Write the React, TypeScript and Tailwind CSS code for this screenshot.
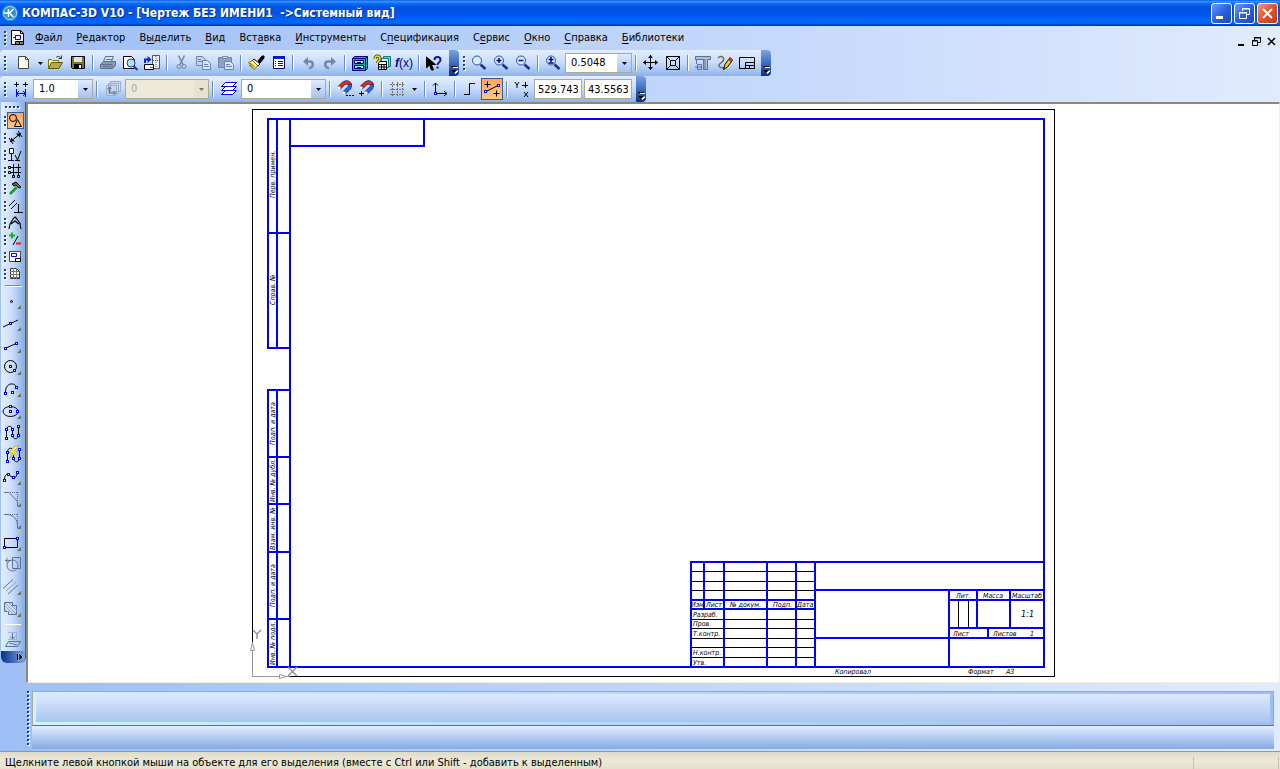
import React from 'react';

type IconProps = { children: React.ReactNode; size?: number };

const Icon: React.FC<IconProps> = ({ children, size = 22 }) => (
  <svg width={size} height={size} viewBox={`0 0 ${size} ${size}`} fill="none" stroke="#000" aria-hidden="true" className="shrink-0">
    {children}
  </svg>
);

const Tool: React.FC<{ label: string; active?: boolean; disabled?: boolean; children: React.ReactNode }> = ({ label, active, disabled, children }) => (
  <button
    type="button"
    aria-label={label}
    title={label}
    disabled={disabled}
    className={active ? 'shrink-0 bg-linear-to-b from-[#fda45c] to-[#ffc981] outline-1 -outline-offset-1 outline-[#3d5a94]' : 'shrink-0 hover:bg-[#ffe7b8]'}
  >
    {children}
  </button>
);

const Sep = () => (
  <div className="flex w-2 shrink-0 justify-center">
    <div className="h-4 w-px bg-[#6a8ccb]" />
    <div className="h-4 w-px bg-white" />
  </div>
);

const Grip: React.FC<{ count?: number; vertical?: boolean }> = ({ count = 4, vertical = true }) => (
  <div className={vertical ? 'flex shrink-0 flex-col gap-0.5' : 'flex shrink-0 gap-0.5'}>
    {Array.from({ length: count }, (_, i) => (
      <span key={i} className="size-0.5 bg-[#27406f] shadow-[1px_1px_0_#fff]" />
    ))}
  </div>
);

const Arrow = () => (
  <svg width="5" height="3" viewBox="0 0 5 3" aria-hidden="true">
    <path d="M0 0h5L2.500 3z" fill="#000" />
  </svg>
);

const Cap = () => (
  <button type="button" aria-label="Параметры панели" className="flex w-[10px] shrink-0 items-end justify-center self-stretch rounded-r-sm bg-linear-to-b from-[#7ba3e2] via-[#3f6dbd] to-[#04328a] pb-0.5">
    <svg width="7" height="8" viewBox="0 0 7 8" aria-hidden="true">
      <path d="M2 1.500h5M2 5h5L4.500 7.500z" stroke="#fff" fill="#fff" />
      <path d="M0 0h6v1H0zM0 4h6L3 7z" fill="#000" />
    </svg>
  </button>
);

const Combo: React.FC<{ label: string; value: string; width: string; disabled?: boolean }> = ({ label, value, width, disabled }) => (
  <div className={`flex h-5 shrink-0 border border-[#aca899] ${width} ${disabled ? 'bg-[#ece9d8]' : 'bg-white'}`}>
    <select aria-label={label} disabled={disabled} className="min-w-0 flex-1 appearance-none bg-transparent pl-[5px] text-[11px] leading-4 outline-none disabled:text-[#aca899]">
      <option>{value}</option>
    </select>
    <div className={`flex w-[14px] items-center justify-center ${disabled ? 'bg-[#e0ddca] opacity-50' : 'bg-linear-to-b from-[#dfebff] to-[#a5c3f2]'}`}>
      <Arrow />
    </div>
  </div>
);

const Node: React.FC<{ x: number; y: number }> = ({ x, y }) => (
  <rect x={x - 1} y={y - 1} width="2" height="2" fill="#fff" stroke="#00f" />
);

const Corner = () => <path d="M19 15v4h-4z" fill="#716f64" stroke="none" />;

const Lens: React.FC<{ sign?: string }> = ({ sign }) => (
  <Icon>
    <path d="M12.500 12.500l5 4.500" stroke="#1a2f8c" strokeWidth="2.500" />
    <circle cx="9" cy="8.500" r="4.500" fill="#d3edff" stroke="#33508f" />
    {sign && <path d={sign} stroke="#00008b" strokeWidth="1.500" />}
  </Icon>
);

const Magnet: React.FC<{ extra: React.ReactNode }> = ({ extra }) => (
  <Icon>
    <path d="M5 10l4-4c5-4 10 1 5 5l-4 4" stroke="#14286e" strokeWidth="4" />
    <path d="M6 9l3-3c3-2 6-2 7 0" stroke="#e22a10" strokeWidth="3" />
    <path d="M16 7c0 2-1 3-2 4l-3 3" stroke="#2a62e8" strokeWidth="3" />
    <path d="M4.500 10.500l1.500-1.500M9.500 15.500l1.500-1.500" stroke="#fff" strokeWidth="3" />
    {extra}
  </Icon>
);

const menu = [
  ['', 'Ф', 'айл'],
  ['', 'Р', 'едактор'],
  ['В', 'ы', 'делить'],
  ['', 'В', 'ид'],
  ['Вст', 'а', 'вка'],
  ['', 'И', 'нструменты'],
  ['С', 'п', 'ецификация'],
  ['С', 'е', 'рвис'],
  ['', 'О', 'кно'],
  ['', 'С', 'правка'],
  ['', 'Б', 'иблиотеки'],
];

const TitleBar = () => (
  <header className="flex h-[26px] items-center bg-[linear-gradient(#0a5be8_0%,#3593ff_6%,#0a6cf5_14%,#0054e3_26%,#0055e8_55%,#0066ff_78%,#0062f5_90%,#0040b0_97%,#003399_100%)] pr-0.5">
    <svg width="16" height="16" viewBox="0 0 16 16" className="ml-0.5 shrink-0" aria-hidden="true">
      <circle cx="8" cy="8" r="8" fill="#2f8fc8" />
      <circle cx="8" cy="8" r="6.500" fill="none" stroke="#a9def5" />
      <path d="M6.500 4v8M11.500 4L7.500 8l4 4M2 8h5" stroke="#fff" strokeWidth="1.500" fill="none" />
    </svg>
    <h1 className="ml-1 flex-1 whitespace-pre font-['DejaVu_Sans_Condensed','DejaVu_Sans',sans-serif] text-xs font-bold text-white [text-shadow:1px_1px_#0a2f88]">
      КОМПАС-3D V10 - [Чертеж БЕЗ ИМЕНИ1  -&gt;Системный вид]
    </h1>
    <div className="flex gap-0.5">
      <button type="button" aria-label="Свернуть" className="size-[21px] rounded-[3px] border border-white bg-linear-to-br from-[#6b9bf8] via-[#2b62e0] to-[#1c47c0]">
        <svg width="19" height="19" viewBox="0 0 19 19"><path d="M4 13.500h7" stroke="#fff" strokeWidth="3" /></svg>
      </button>
      <button type="button" aria-label="Восстановить" className="size-[21px] rounded-[3px] border border-white bg-linear-to-br from-[#6b9bf8] via-[#2b62e0] to-[#1c47c0]">
        <svg width="19" height="19" viewBox="0 0 19 19" fill="none" stroke="#fff"><path d="M7.500 7V4.500h7v6H12M7 5h8M4.500 8.500h7v6h-7zM4 9h8" /></svg>
      </button>
      <button type="button" aria-label="Закрыть" className="size-[21px] rounded-[3px] border border-white bg-linear-to-br from-[#f0957c] via-[#e0512c] to-[#c23a12]">
        <svg width="19" height="19" viewBox="0 0 19 19"><path d="M5 5l9 9M14 5l-9 9" stroke="#fff" strokeWidth="2" /></svg>
      </button>
    </div>
  </header>
);

const MenuBar = () => (
  <nav aria-label="Главное меню" className="flex h-6 items-center pl-1 pr-1">
    <Grip />
    <svg width="14" height="16" viewBox="0 0 14 16" className="ml-[5px] mr-1 shrink-0" fill="none" stroke="#000" aria-hidden="true">
      <path d="M.5.500h9l3 3v11H.5z" fill="#fff" />
      <path d="M9.500.500v3h3" />
      <path d="M2 7.500h2M4.500 5v5M4.500 5.500h5v4h-5" stroke="#00f" />
      <path d="M4.500 11.500h8v3h-8zM8.500 12v3M5 13h7" />
    </svg>
    <div className="flex flex-1 gap-0.5">
      {menu.map(([before, key, after]) => (
        <button key={key + after} type="button" className="shrink-0 px-1.5 hover:bg-[#ffe7b8]">
          {before}
          <u className="underline-offset-2">{key}</u>
          {after}
        </button>
      ))}
    </div>
    <div className="mt-1.5 flex gap-1.5">
      <button type="button" aria-label="Свернуть документ">
        <svg width="8" height="9" viewBox="0 0 8 9"><path d="M0 8h6" stroke="#000" strokeWidth="2" /></svg>
      </button>
      <button type="button" aria-label="Восстановить документ">
        <svg width="9" height="9" viewBox="0 0 9 9" fill="none" stroke="#000"><path d="M2.500 3V.500h6v5H6M2 1h7M.5 3.500h5v5h-5zM0 4h6" /></svg>
      </button>
      <button type="button" aria-label="Закрыть документ">
        <svg width="9" height="9" viewBox="0 0 9 9"><path d="M1 1l7 7M8 1L1 8" stroke="#000" strokeWidth="1.500" /></svg>
      </button>
    </div>
  </nav>
);

const StandardBar = () => (
  <div className="flex h-[26px] items-center rounded-sm bg-linear-to-b from-[#e3eeff] via-[#c6dbfb] to-[#8db3ec] pl-1" role="toolbar" aria-label="Стандартная">
    <Grip />
    <div className="ml-[7px] flex items-center">
      <Tool label="Создать">
        <Icon>
          <path d="M5.500 4.500h7l3 3v9h-10z" fill="#fffdf0" stroke="#444" />
          <path d="M12.500 4.500v3h3" stroke="#444" />
        </Icon>
      </Tool>
      <button type="button" aria-label="Виды документов" className="flex w-[10px] justify-center"><Arrow /></button>
      <Tool label="Открыть">
        <Icon>
          <path d="M3.500 16.500v-9h3l1 1h6v2" fill="#fff3a0" stroke="#7a7a00" />
          <path d="M3.500 16.500l3-6h11l-3.500 6z" fill="#b5a94a" stroke="#5d5a00" />
          <path d="M11 5.500c2-2 4-1 5 1M16.500 3.500v3h-3" stroke="#333" />
        </Icon>
      </Tool>
      <Tool label="Сохранить">
        <Icon>
          <path d="M4.500 4.500h13v12h-12l-1-1z" fill="#7d7a10" />
          <path d="M7 5h8v5H7z" fill="#d9e2ee" stroke="none" />
          <path d="M7 12h8v5H7z" fill="#000" stroke="none" />
          <path d="M12 13h2v3h-2z" fill="#fff" stroke="none" />
        </Icon>
      </Tool>
      <Sep />
      <Tool label="Печать">
        <Icon>
          <path d="M6.500 9.500l2-5h8l-2 5z" fill="#dce6f6" stroke="#5d6f8d" />
          <path d="M3.500 12.500l3-3h12v4l-3 3h-12z" fill="#8a9ab5" stroke="#5d6f8d" />
          <path d="M4 12.500h11v4M6 14.500h7M9 7.500h6" stroke="#5d6f8d" />
        </Icon>
      </Tool>
      <Tool label="Предварительный просмотр">
        <Icon>
          <path d="M4.500 4.500h8l3 3v9h-11z" fill="#fff" />
          <circle cx="12" cy="11" r="4" fill="#b5e2f5" stroke="#1b3f90" />
          <path d="M14.500 14l4 4" stroke="#1b3f90" strokeWidth="2" />
        </Icon>
      </Tool>
      <Tool label="Менеджер документа">
        <Icon>
          <path d="M11.500 3.500h7v13h-7z" fill="#eef2fa" stroke="#555" />
          <path d="M15 4v12M12 8.500h6" stroke="#555" strokeDasharray="1 1" />
          <path d="M4 11V7.500h4" stroke="#0028e0" strokeWidth="2" />
          <path d="M6.500 4l4 3.500-4 3.500z" fill="#0028e0" stroke="none" />
          <path d="M3.500 12.500h9v5h-9z" fill="#fff" />
          <path d="M9 15.500h3" stroke="#e02020" />
        </Icon>
      </Tool>
      <Sep />
      <Tool label="Вырезать" disabled>
        <Icon>
          <path d="M7.500 3.500l4.500 9M13.500 3.500l-4.500 9" stroke="#6c84ac" strokeWidth="1.500" />
          <circle cx="8" cy="14.500" r="2" stroke="#6c84ac" />
          <circle cx="13" cy="14.500" r="2" stroke="#6c84ac" />
        </Icon>
      </Tool>
      <Tool label="Копировать" disabled>
        <Icon>
          <path d="M3.500 4.500h6l3 3v6h-9z" fill="#c3d3ee" stroke="#6c84ac" />
          <path d="M9.500 8.500h5l3 3v6h-8z" fill="#d9e4f6" stroke="#6c84ac" />
          <path d="M5 7.500h3M5 9.500h4M11 12.500h4M11 14.500h5" stroke="#6c84ac" />
        </Icon>
      </Tool>
      <Tool label="Вставить" disabled>
        <Icon>
          <path d="M3.500 5.500h13v10h-13z" fill="#8ea2c4" stroke="#6c84ac" />
          <path d="M7.500 4.500h5v2h-5z" fill="#d9e4f6" stroke="#6c84ac" />
          <path d="M9.500 9.500h6l3 3v5h-9z" fill="#d9e4f6" stroke="#6c84ac" />
          <path d="M11 12.500h4M11 14.500h6" stroke="#6c84ac" />
        </Icon>
      </Tool>
      <Sep />
      <Tool label="Копировать свойства">
        <Icon>
          <path d="M13 9l4-5h2v2l-4 5z" fill="#000" />
          <path d="M9 7l6 5-2 2-6-5z" fill="#fff" />
          <path d="M3.500 10.500l4-2 5 5-3 4z" fill="#fff08a" stroke="#7a7a00" />
          <path d="M5 11l5 4M4 13l5 4" stroke="#7a7a00" />
        </Icon>
      </Tool>
      <Tool label="Свойства">
        <Icon>
          <path d="M6.500 4.500h11v12h-11z" fill="#fff" stroke="#000080" />
          <path d="M6 5.500h12" stroke="#0018c8" strokeWidth="3" />
          <path d="M8 9.500h1M8 11.500h1M8 13.500h1M11 9.500h5M11 11.500h5M11 13.500h5" stroke="#0018c8" />
        </Icon>
      </Tool>
      <Sep />
      <Tool label="Отменить" disabled>
        <Icon>
          <path d="M9 9.500h4c3 0 4 4 1 6l-2 1" stroke="#7488ae" strokeWidth="2.500" />
          <path d="M11 5v9L6 9.500z" fill="#7488ae" stroke="none" />
        </Icon>
      </Tool>
      <Tool label="Повторить" disabled>
        <Icon>
          <path d="M13 9.500H9c-3 0-4 4-1 6l2 1" stroke="#7488ae" strokeWidth="2.500" />
          <path d="M12 5v9l5-4.500z" fill="#7488ae" stroke="none" />
        </Icon>
      </Tool>
      <Sep />
      <Tool label="Менеджер библиотек">
        <Icon>
          <path d="M3.500 6.500l2-2h13v12l-2 2h-13z" fill="#21a5b5" stroke="#000080" />
          <path d="M3.500 6.500h13v12M16.500 6.500l2-2" stroke="#000080" />
          <path d="M5.500 8.500h9v3h-9zM5.500 13.500h9v3h-9z" fill="#a0f0f5" stroke="#000080" />
          <path d="M8 10.500h4M8 15.500h4" stroke="#000080" />
        </Icon>
      </Tool>
      <Tool label="Справочник">
        <Icon>
          <path d="M12.500 4.500h7v10h-7z" fill="#5fd8e0" stroke="#127880" />
          <path d="M10.500 6.500h7v9h-7z" fill="#d8f7fa" stroke="#127880" />
          <path d="M7.500 9.500h8v8h-8z" fill="#fff" />
          <path d="M8 12.500h7M8 15h7M10.500 12v6M13 12v6" />
          <path d="M4 7c0-4 5-4 5 0 0 2-2 1.500-2.500 4" stroke="#333" strokeWidth="3" />
          <path d="M4 7c0-4 5-4 5 0 0 2-2 1.500-2.500 4" stroke="#f5e900" strokeWidth="1.500" />
        </Icon>
      </Tool>
      <button type="button" aria-label="Переменные" className="w-[22px] shrink-0 text-center font-['Liberation_Sans',sans-serif] text-xs font-bold text-[#000080]">
        <i>f</i><span className="font-normal">(x)</span>
      </button>
      <Sep />
      <Tool label="Что это такое?">
        <Icon>
          <path d="M3.500 5v11l3-3 2 5h2l-2-5.500h4z" fill="#000" />
          <path d="M11.500 8c0-4 6-4 6 0 0 2.500-3 2-3 5M14.500 14.500v2" stroke="#0a1e8c" strokeWidth="2" />
        </Icon>
      </Tool>
    </div>
    <div className="ml-1 flex self-stretch"><Cap /></div>
    <div className="ml-1 flex items-center">
      <Grip />
      <div className="ml-[3px] mr-px flex items-center">
        <Tool label="Увеличить масштаб рамкой"><Lens /></Tool>
        <Tool label="Увеличить масштаб"><Lens sign="M6.500 8.500h5M9 6v5" /></Tool>
        <Tool label="Уменьшить масштаб"><Lens sign="M6.500 8.500h5" /></Tool>
        <Sep />
        <Tool label="Масштаб"><Lens sign="M6.500 7.500h5M9 5v5M6.500 11h5" /></Tool>
      </div>
      <Combo label="Текущий масштаб" value="0.5048" width="w-[67px]" />
      <Sep />
      <Tool label="Сдвинуть">
        <Icon>
          <path d="M3 10.500h15M10.500 3v15" />
          <path d="M3 10.500l3-2.500v5zM18 10.500l-3-2.500v5zM10.500 3L8 6h5zM10.500 18L8 15h5z" fill="#000" stroke="none" />
        </Icon>
      </Tool>
      <Tool label="Показать все">
        <Icon>
          <path d="M4.500 4.500h13v13h-13zM8.500 8.500h5v5h-5zM4.500 4.500l4 4M17.500 4.500l-4 4M4.500 17.500l4-4M17.500 17.500l-4-4" />
        </Icon>
      </Tool>
      <Sep />
      <Tool label="Библиотеки стандартных элементов">
        <Icon>
          <path d="M3.500 8V4.500h15v3h-3v10h-4v-10h-8" fill="#aebfd9" stroke="#5f7190" />
          <path d="M13 7v10M4.500 8v4M5.500 12.500h4v5h-4zM3 15h6" stroke="#5f7190" />
        </Icon>
      </Tool>
      <Tool label="Редактировать">
        <Icon>
          <path d="M4 6c4-4 8 1 4 4s-5 5 2 6" stroke="#6b6b50" strokeWidth="1.500" />
          <path d="M9.500 17.500l1.500-5 5-7 2.500 2.500-5 7z" fill="#ffd400" />
          <path d="M14 7.500l2.500 2.500 2-2-2-3z" fill="#d03020" stroke="none" />
        </Icon>
      </Tool>
      <Tool label="Основная надпись">
        <Icon>
          <path d="M3.500 5.500h15v11h-15zM9.500 10.500h9v6h-9zM10 13.500h8M13.500 13v3" />
        </Icon>
      </Tool>
    </div>
    <div className="ml-[3px] flex self-stretch"><Cap /></div>
  </div>
);

const coord = 'h-5 w-12 shrink-0 border border-[#aca899] bg-white px-[3px] text-[11px] leading-4 outline-none';

const StateBar = () => (
  <div className="flex h-[26px] items-center rounded-sm bg-linear-to-b from-[#e3eeff] via-[#c6dbfb] to-[#8db3ec] pl-1" role="toolbar" aria-label="Текущее состояние">
    <Grip />
    <div className="ml-1 flex items-center">
      <div className="mr-px flex">
        <Tool label="Текущий шаг курсора">
          <Icon>
            <path d="M4 6.500h5M6.500 4v5M13 6.500h5M15.500 4v5" />
            <path d="M6.500 11v8M15.500 11v8M6 15.500h10M9 13l-2.500 2.500L9 18M13 13l2.500 2.500L13 18" stroke="#00f" />
          </Icon>
        </Tool>
      </div>
      <Combo label="Шаг курсора" value="1.0" width="w-[60px]" />
      <Sep />
      <div className="mx-px flex">
        <Tool label="Состояние видов" disabled>
          <Icon>
            <path d="M8.500 3.500h10v10h-10zM6.500 5.500h10v10h-10zM4.500 7.500h10v10h-10z" fill="#c9d7ef" stroke="#9badcb" />
            <path d="M7.500 9v6h6M5.500 11l2-2 2 2M11.500 13l2 2-2 2" stroke="#5e7194" />
          </Icon>
        </Tool>
      </div>
      <Combo label="Номер вида" value="0" width="w-[84px]" disabled />
      <Sep />
      <div className="mx-px flex">
        <Tool label="Состояние слоев">
          <Icon>
            <path d="M3.500 16.500l4-4h11l-4 4zM3.500 12.500l4-4h11l-4 4zM3.500 8.500l4-4h11l-4 4z" fill="#fff" stroke="#0000e6" />
          </Icon>
        </Tool>
      </div>
      <Combo label="Текущий слой" value="0" width="w-[85px]" />
      <Sep />
      <Tool label="Настройка привязок"><Magnet extra={<path d="M12 17.500h2M15 17.500h2M18 17.500h2" stroke="#000" />} /></Tool>
      <Tool label="Запретить привязки"><Magnet extra={<path d="M3 15.500h5M5.500 13v5" />} /></Tool>
      <Sep />
      <Tool label="Сетка">
        <Icon>
          <path d="M4 6.500h15M4 11.500h15M4 16.500h15M6.500 4v14M11.500 4v14M16.500 4v14" stroke="#716f64" strokeDasharray="2 1" />
        </Icon>
      </Tool>
      <button type="button" aria-label="Параметры сетки" className="flex w-[13px] justify-center"><Arrow /></button>
      <Sep />
      <Tool label="Локальная система координат">
        <Icon>
          <path d="M6.500 15V5M4 7.500L6.500 5 9 7.500M8 15.500h10M15 13l3 2.500-3 2.500" />
          <Node x={6.5} y={15.5} />
        </Icon>
      </Tool>
      <Sep />
      <Tool label="Ортогональное черчение">
        <Icon><path d="M5 16.500h5.500v-11H16" /></Icon>
      </Tool>
      <Tool label="Округление" active>
        <Icon>
          <path d="M5 13.500l12-6M3.500 6.500h6M6.500 3.500v6M12.500 15.500h6M15.500 12.500v6" />
          <Node x={4.5} y={13.5} />
          <Node x={17.5} y={7.5} />
        </Icon>
      </Tool>
      <Sep />
      <div className="mr-px">
        <Icon>
          <path d="M4 4l2 3 2-3M6 7v3M13 14l4 5M17 14l-4 5" />
          <path d="M11 7.500h6M14.500 4v6" />
        </Icon>
      </div>
      <div className="flex gap-0.5">
        <input aria-label="Координата X" defaultValue="529.7438" className={coord} />
        <input aria-label="Координата Y" defaultValue="43.5563" className={coord} />
      </div>
    </div>
    <div className="ml-1 flex self-stretch"><Cap /></div>
  </div>
);

const panels: [string, React.ReactNode][] = [
  ['Геометрия', <><circle cx="6" cy="6" r="3.500" /><path d="M10.500 7.500l4 7h-7z" /></>],
  ['Размеры', <><path d="M3 13L14 4M2 9l4 6M11 2l4 6" /><path d="M4 12.500v-4l4 4zM13 4.500v4l-4-4z" fill="#000" stroke="none" /></>],
  ['Обозначения', <><path d="M2.500 2.500h4v5h-4z" fill="#fff" stroke="#000080" /><path d="M4.500 8v6M1 14.500h6" stroke="#000080" /><path d="M8 9l2.500 5L14 5M8 14.500h5" /></>],
  ['Обозначения для строительства', <path d="M4 4.500h10M4 9.500h10M6.500 1v11M11.500 1v11M1.500 3.500h2v2h-2zM1.500 8.500h2v2h-2zM5.500 12.500h2v2h-2zM10.500 12.500h2v2h-2z" />],
  ['Редактирование', <><path d="M3 14l7-7" stroke="#179a20" strokeWidth="2.500" /><path d="M5 4l4-2 5 5-2 1-3-3-2 1z" fill="#666" /></>],
  ['Параметризация', <path d="M2 9l6-6M4 12l6-6M11.500 7v8M7 15.500h9" />],
  ['Измерения', <path d="M7.500 3L3 10M8.500 3l5 7M6 5l2-2 2 2M3 10l-1 5M13 10l1 5M4 10l4-3 4 3" strokeWidth="1.200" />],
  ['Выделение', <><path d="M2 4.500h6M5 1.500v6" stroke="#0cb51a" strokeWidth="2" /><path d="M6 14l5-9" /><path d="M9 12.500h5" stroke="#f01818" strokeWidth="2" /></>],
  ['Ассоциативные виды', <><path d="M2.500 3.500h11v10h-11z" fill="#fff" stroke="#444" /><path d="M4.500 5.500h5v3h-5z" fill="#fff" stroke="#00f" /><path d="M8.500 10.500h5v3h-5z" /></>],
  ['Спецификация', <><path d="M3.500 3.500h6l3 3v7h-9z" fill="#fff" stroke="#333" /><path d="M3 6.500h9M3 9.500h9M3 12.500h9M6.500 3v11M9.500 3v11" stroke="#777" /></>],
];

const shapes: [string, React.ReactNode][] = [
  ['Точка', <><circle cx="9.500" cy="11.500" r="1" fill="#aaa" /><Corner /></>],
  ['Вспомогательная прямая', <><path d="M1 15l15-7" /><Node x={8.5} y={11.5} /><Corner /></>],
  ['Отрезок', <><path d="M3 14.500l11-5" /><Node x={3.5} y={14.5} /><Node x={14.5} y={9.5} /><Corner /></>],
  ['Окружность', <><circle cx="8.500" cy="10.500" r="6" /><Node x={8.5} y={10.5} /><Node x={12.5} y={14.5} /><Corner /></>],
  ['Дуга', <><path d="M3.500 15c-1-9 8-12 11-6" /><Node x={3.5} y={15.5} /><Node x={14.5} y={9.5} /><Node x={10.5} y={14.5} /><Corner /></>],
  ['Эллипс', <><ellipse cx="8.500" cy="11.500" rx="7.500" ry="5" /><Node x={8.5} y={11.5} /><Node x={8.5} y={6.5} /><Node x={15.5} y={11.5} /><Corner /></>],
  ['Кривая Безье', <><path d="M4.500 16V8c0-5 6-5 6 0v5c0 5 6 5 6 0V5" /><Node x={4.5} y={7.5} /><Node x={4.5} y={16.5} /><Node x={10.5} y={7.5} /><Node x={10.5} y={13.5} /><Node x={16.5} y={4.5} /><Node x={16.5} y={13.5} /></>],
  ['NURBS', <><path d="M5.500 17V8c0-5 6-5 6 0v6c0 5 6 5 6 0V5" /><path d="M13 2L7 9h4l-4 6 9-8h-4l5-5z" fill="#fff04a" stroke="#8a8330" strokeWidth=".5" /><Node x={5.5} y={8.5} /><Node x={5.5} y={17.5} /><Node x={11.5} y={14.5} /><Node x={17.5} y={5.5} /><Node x={17.5} y={14.5} /></>],
  ['Непрерывный ввод объектов', <><path d="M2.500 14c0-6 3-6 4-5.500l4 3c3 1 4-1 5-5" /><Node x={2.5} y={14.5} /><Node x={6.5} y={8.5} /><Node x={11.5} y={11.5} /><Node x={15.5} y={6.5} /><Corner /></>],
  ['Фаска', <><path d="M2 4.500h5l8.500 9V18" stroke="#5f7190" /><path d="M8 4.500h8M15.500 4v9" stroke="#5f7190" strokeDasharray="1 1" /><Corner /></>],
  ['Скругление', <><path d="M2 4.500h4c6 1 9 5 9.500 10V18" stroke="#5f7190" /><path d="M8 4.500h8M15.500 4v9" stroke="#5f7190" strokeDasharray="1 1" /><Corner /></>],
  ['Прямоугольник', <><path d="M2.500 6.500h13v9h-13z" /><Node x={15.5} y={6.5} /><Node x={2.5} y={15.5} /><Corner /></>],
  ['Собрать контур', <g stroke="#5f7190"><path d="M10.500 3.500h8v11h-8z" /><circle cx="10.500" cy="11.500" r="5.500" /><path d="M9 6.500H3.500M6 4L3.500 6.500 6 9" /></g>],
  ['Эквидистанта', <><path d="M1 12.500l10-9M6 18l10-9" stroke="#5f7190" /><path d="M4 15l10-9" stroke="#8fa3c6" /><Corner /></>],
  ['Штриховка', <><path d="M2.500 4.500h8v3h4v9h-8v-3h-4z" stroke="#5f7190" /><path d="M3 8l8 8M3 5l11 11M7 5l8 8M3 11l3 3" stroke="#8fa3c6" /><Corner /></>],
];

const LeftBar = () => (
  <aside aria-label="Компактная панель" className="flex w-[26px] shrink-0 flex-col pl-px">
    <div className="flex flex-col rounded-b-md border-r border-[#3b619c] bg-linear-to-r from-[#e3eeff] via-[#c6dbfb] to-[#84abe3]">
      <div className="py-1 pl-1">
        <Grip count={4} vertical={false} />
      </div>
      {panels.map(([label, art], i) => (
        <div key={label} className="flex items-center gap-px pl-[3px]">
          <Grip count={3} />
          <Tool label={label} active={i === 0}>
            <Icon size={17}>{art}</Icon>
          </Tool>
        </div>
      ))}
      <div className="mx-1 mb-1 mt-[3px] h-px bg-[#6a8ccb] shadow-[1px_1px_0_#fff]" />
      {shapes.map(([label, art]) => (
        <div key={label} className="flex pl-px">
          <Tool label={label}><Icon>{art}</Icon></Tool>
        </div>
      ))}
      <div className="mx-1 my-1 h-px bg-white" />
      <div className="flex pl-px">
        <Tool label="Ввод из файла" disabled>
          <Icon>
            <path d="M6.500 3.500h8v7h-8" stroke="#7f92b5" strokeDasharray="1 1" />
            <path d="M10.500 4v6M8 7.500l2.500 2.500L13 7.500M3.500 17.500l3-5h12l-3 5zM7 14l8 2" stroke="#5f7190" />
          </Icon>
        </Tool>
      </div>
      <button type="button" aria-label="Ещё" className="flex h-3 items-center justify-end rounded-b-md bg-linear-to-r from-[#04328a] to-[#7ba3e2] pr-0.5">
        <svg width="7" height="8" viewBox="0 0 7 8"><path d="M1.500 1v6" stroke="#000" /><path d="M3 0l4 4-4 4z" fill="#000" stroke="#fff" strokeWidth=".5" /></svg>
      </button>
    </div>
  </aside>
);

// Frame text runs bottom-to-top in the side columns: [text, baseline x, start y]
const sideText: [string, number, number][] = [
  ['Перв. примен.', 275, 198],
  ['Справ. №', 275, 305],
  ['Подп. и дата', 275, 445],
  ['Инв. № дубл.', 275, 502],
  ['Взам. инв. №', 275, 550],
  ['Подп. и дата', 275, 607],
  ['Инв. № подл.', 275, 665],
];

const stampText: [string, number, number][] = [
  ['Изм.', 691, 607],
  ['Лист', 706, 607],
  ['№ докум.', 730, 607],
  ['Подп.', 773, 607],
  ['Дата', 797, 607],
  ['Разраб.', 693, 617],
  ['Пров.', 693, 626],
  ['Т.контр.', 693, 636],
  ['Н.контр.', 693, 655],
  ['Утв.', 693, 665],
  ['Лит.', 956, 598],
  ['Масса', 983, 598],
  ['Масштаб', 1012, 598],
  ['Лист', 953, 636],
  ['Листов', 993, 636],
  ['1', 1030, 636],
  ['Копировал', 835, 674],
  ['Формат', 968, 674],
  ['A3', 1006, 674],
];

const Sheet = () => (
  <svg width="803" height="568" viewBox="252 109 803 568" fill="none" role="img" aria-label="Лист чертежа формата А3" className="shrink-0 overflow-visible">
    <rect x="252.500" y="109.500" width="802" height="567" stroke="#000" />
    <g stroke="#000">
      <path d="M691 571.500h124M691 581.500h124M691 590.500h124M691 619.500h124M691 628.500h124M691 638.500h124M691 647.500h124M691 657.500h124" />
      <path d="M958.500 600v28M968.500 600v28" />
    </g>
    <g stroke="#00f" strokeWidth="2">
      <path d="M267 119h778M290 118v550M1044 118v550M267 667h778M424 119v28M290 146h135" />
      <path d="M268 119v230M277 119v229M268 233h22M267 348h23" />
      <path d="M268 389v279M277 390v277M267 390h23M268 457h22M268 504h22M268 552h22M268 619h22" />
      <path d="M690 562h354M691 562v105M704 562v47M724 562v105M767 562v105M796 562v105M815 562v105M691 600h124M691 609h124" />
      <path d="M815 590h229M815 638h229M949 590v77M949 600h95M949 628h95M977 590v38M1010 590v38M988 628v10" />
    </g>
    <g fill="#000" className="font-['DejaVu_Sans_Condensed','DejaVu_Sans',sans-serif] text-[7px] italic">
      {stampText.map(([text, x, y]) => (
        <text key={`${x}-${y}`} x={x} y={y}>{text}</text>
      ))}
      {sideText.map(([text, x, y]) => (
        <text key={y} transform={`translate(${x} ${y}) rotate(-90)`}>{text}</text>
      ))}
      <text x="1021" y="617" className="text-[9px]">1:1</text>
    </g>
    <g stroke="#969696">
      <path d="M252.500 642v34.500h37" stroke="#fff" />
      <path d="M252.500 642v34.500h37" />
      <path d="M250.500 650.500l2-8 2 8zM279.500 674.500l7 2-7 2z" fill="#fff" />
      <path d="M253 630l4 4 4-4M257 634v5M288 667l9 9M297 667l-9 9" strokeWidth="1.500" />
    </g>
  </svg>
);

const PropertyPanel = () => (
  <section aria-label="Панель свойств" className="flex gap-[3px] pb-0.5 pl-[27px] pr-1.5 pt-2">
    <Grip count={14} />
    <div className="flex-1">
      <div className="h-[35px] border border-[#aca899] border-b-[#716f64] bg-linear-to-r from-[#c8f5ff] to-[#9dbef0] p-[3px] pt-0.5">
        <div className="h-full bg-linear-to-b from-[#dde8ff] to-[#abc5ef]" />
      </div>
      <div className="h-[23px] bg-linear-to-b from-[#e3edff] to-[#84abe3]" />
    </div>
  </section>
);

const App: React.FC = () => (
  <div className="flex min-h-screen flex-col overflow-hidden bg-linear-to-r from-[#9ebef5] to-[#e0ebfe] font-['DejaVu_Sans_Condensed','DejaVu_Sans',sans-serif] text-[11px] leading-4 text-black">
    <TitleBar />
    <MenuBar />
    <div className="flex"><StandardBar /></div>
    <div className="flex"><StateBar /></div>
    <div className="flex flex-1">
      <LeftBar />
      <main className="flex flex-1 items-start justify-center border-2 border-b border-r border-[#8b887a] border-b-[#f1efe2] border-r-[#f1efe2] bg-white pb-1 pt-[5px]">
        <Sheet />
      </main>
    </div>
    <PropertyPanel />
    <footer className="flex h-[18px] items-center border-t border-[#9a9888] bg-linear-to-b from-[#dedbc9] via-[#ece9d8] to-[#e2dfc8] pl-[5px] pr-px pt-1">
      <p className="flex-1 whitespace-nowrap leading-3">Щелкните левой кнопкой мыши на объекте для его выделения (вместе с Ctrl или Shift - добавить к выделенным)</p>
      <div className="h-3 w-[86px] border-x border-[#c5c2b0]" />
    </footer>
  </div>
);

export default App;
